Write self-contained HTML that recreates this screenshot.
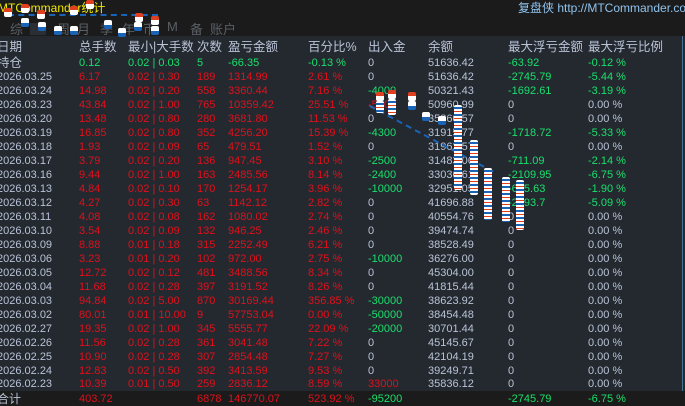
<!DOCTYPE html>
<html><head><meta charset="utf-8"><style>
*{margin:0;padding:0;box-sizing:border-box}
body{width:685px;height:406px;overflow:hidden;background:#242930;font-family:"Liberation Sans","Noto Sans CJK SC",sans-serif;font-size:11px;position:relative}
#top{position:absolute;left:0;top:0;width:685px;height:36px;background:#1b1b1b}
.t{position:absolute;white-space:nowrap}
.tb{position:absolute;top:19px;color:#5a5f66;font-size:13px;white-space:nowrap}
.r{position:absolute;left:0;width:685px;height:14px;line-height:14px}
.r span{position:absolute;top:0;white-space:nowrap}
.c0{left:-3px}.c1{left:79px}.c2{left:128px}.c3{left:197px}.c4{left:228px}.c5{left:308px}.c6{left:368px}.c7{left:428px}.c8{left:508px}.c9{left:588px}
.g{color:#b9c3d6}.rd{color:#e0101a}.gr{color:#19e06c}
.h{font-size:12.5px;color:#b9c3d6}
#tot{position:absolute;left:0;top:391px;width:685px;height:15px;background:#1b1b1b}
.mk{position:absolute;width:8px;border-radius:2px;background:repeating-linear-gradient(#fff 0 2px,#1a64b8 2px 4px,#fff 4px 6px,#e04020 6px 7px)}
.dn{position:absolute;width:8px;height:9px;background:#fff;border-radius:2px;border-top:4px solid #e04020}
.up{position:absolute;width:8px;height:9px;background:#fff;border-radius:2px;border-bottom:4px solid #1a64b8}
</style></head><body>
<div id="top"></div>
<div class="t" style="left:-2px;top:-1px;color:#f0e800;font-size:12px">MTCommander统计</div>
<div class="tb" style="left:10px">综</div><div class="tb" style="left:33px">日</div><div class="tb" style="left:57px">周</div><div class="tb" style="left:77px">月</div><div class="tb" style="left:100px">季</div><div class="tb" style="left:122px">年</div><div class="tb" style="left:143px">币</div><div class="tb" style="left:167px">M</div><div class="tb" style="left:190px">备</div><div class="tb" style="left:210px">账户</div>
<div style="position:absolute;left:30px;top:23px;width:16px;height:12px;background:#2a2f36"></div>
<div class="t" style="left:518px;top:-1px;color:#8fc3ee;font-size:12px">复盘侠 http://MTCommander.com</div>
<div style="position:absolute;left:682px;top:36px;width:1px;height:355px;background:#4a7090"></div>

<!-- top chart markers -->
<div style="position:absolute;left:8px;top:14px;width:150px;height:2px;border-top:2px dashed #1a64b8"></div>
<div class="dn" style="left:4px;top:8px"></div><div class="dn" style="left:21px;top:4px"></div><div class="dn" style="left:37px;top:10px"></div><div class="dn" style="left:70px;top:6px"></div><div class="dn" style="left:86px;top:0px"></div><div class="dn" style="left:135px;top:13px"></div><div class="dn" style="left:151px;top:16px"></div>
<div class="up" style="left:21px;top:18px"></div><div class="up" style="left:38px;top:22px"></div><div class="up" style="left:54px;top:26px"></div><div class="up" style="left:70px;top:26px"></div><div class="up" style="left:104px;top:20px"></div><div class="up" style="left:118px;top:28px"></div><div class="up" style="left:134px;top:22px"></div><div class="up" style="left:151px;top:26px"></div>

<div class="r h" style="top:40px"><span class="c0">日期</span><span class="c1">总手数</span><span class="c2">最小|大手数</span><span class="c3">次数</span><span class="c4">盈亏金额</span><span class="c5">百分比%</span><span class="c6">出入金</span><span class="c7">余额</span><span class="c8">最大浮亏金额</span><span class="c9">最大浮亏比例</span></div>
<div class="r" style="top:56px"><span class="c0 g" style="font-size:12.5px">持仓</span><span class="c1 gr">0.12</span><span class="c2 gr">0.02 | 0.03</span><span class="c3 gr">5</span><span class="c4 gr">-66.35</span><span class="c5 gr">-0.13 %</span><span class="c6 g">0</span><span class="c7 g">51636.42</span><span class="c8 gr">-63.92</span><span class="c9 gr">-0.12 %</span></div>

<div class="r" style="top:70px"><span class="c0 g">2026.03.25</span><span class="c1 rd">6.17</span><span class="c2 rd">0.02 | 0.30</span><span class="c3 rd">189</span><span class="c4 rd">1314.99</span><span class="c5 rd">2.61 %</span><span class="c6 g">0</span><span class="c7 g">51636.42</span><span class="c8 gr">-2745.79</span><span class="c9 gr">-5.44 %</span></div>
<div class="r" style="top:84px"><span class="c0 g">2026.03.24</span><span class="c1 rd">14.98</span><span class="c2 rd">0.02 | 0.20</span><span class="c3 rd">558</span><span class="c4 rd">3360.44</span><span class="c5 rd">7.16 %</span><span class="c6 gr">-4000</span><span class="c7 g">50321.43</span><span class="c8 gr">-1692.61</span><span class="c9 gr">-3.19 %</span></div>
<div class="r" style="top:98px"><span class="c0 g">2026.03.23</span><span class="c1 rd">43.84</span><span class="c2 rd">0.02 | 1.00</span><span class="c3 rd">765</span><span class="c4 rd">10359.42</span><span class="c5 rd">25.51 %</span><span class="c6 rd">-5000</span><span class="c7 g">50960.99</span><span class="c8 g">0</span><span class="c9 g">0.00 %</span></div>
<div class="r" style="top:112px"><span class="c0 g">2026.03.20</span><span class="c1 rd">13.48</span><span class="c2 rd">0.02 | 0.80</span><span class="c3 rd">280</span><span class="c4 rd">3681.80</span><span class="c5 rd">11.53 %</span><span class="c6 g">0</span><span class="c7 g">35860.57</span><span class="c8 g">0</span><span class="c9 g">0.00 %</span></div>
<div class="r" style="top:126px"><span class="c0 g">2026.03.19</span><span class="c1 rd">16.85</span><span class="c2 rd">0.02 | 0.80</span><span class="c3 rd">352</span><span class="c4 rd">4256.20</span><span class="c5 rd">15.39 %</span><span class="c6 gr">-4300</span><span class="c7 g">31915.77</span><span class="c8 gr">-1718.72</span><span class="c9 gr">-5.33 %</span></div>
<div class="r" style="top:140px"><span class="c0 g">2026.03.18</span><span class="c1 rd">1.93</span><span class="c2 rd">0.02 | 0.09</span><span class="c3 rd">65</span><span class="c4 rd">479.51</span><span class="c5 rd">1.52 %</span><span class="c6 g">0</span><span class="c7 g">31962.57</span><span class="c8 g">0</span><span class="c9 g">0.00 %</span></div>
<div class="r" style="top:154px"><span class="c0 g">2026.03.17</span><span class="c1 rd">3.79</span><span class="c2 rd">0.02 | 0.20</span><span class="c3 rd">136</span><span class="c4 rd">947.45</span><span class="c5 rd">3.10 %</span><span class="c6 gr">-2500</span><span class="c7 g">31483.06</span><span class="c8 gr">-711.09</span><span class="c9 gr">-2.14 %</span></div>
<div class="r" style="top:168px"><span class="c0 g">2026.03.16</span><span class="c1 rd">9.44</span><span class="c2 rd">0.02 | 1.00</span><span class="c3 rd">163</span><span class="c4 rd">2485.56</span><span class="c5 rd">8.14 %</span><span class="c6 gr">-2400</span><span class="c7 g">33036.61</span><span class="c8 gr">-2109.95</span><span class="c9 gr">-6.75 %</span></div>
<div class="r" style="top:182px"><span class="c0 g">2026.03.13</span><span class="c1 rd">4.84</span><span class="c2 rd">0.02 | 0.10</span><span class="c3 rd">170</span><span class="c4 rd">1254.17</span><span class="c5 rd">3.96 %</span><span class="c6 gr">-10000</span><span class="c7 g">32951.05</span><span class="c8 gr">-615.63</span><span class="c9 gr">-1.90 %</span></div>
<div class="r" style="top:196px"><span class="c0 g">2026.03.12</span><span class="c1 rd">4.27</span><span class="c2 rd">0.02 | 0.30</span><span class="c3 rd">63</span><span class="c4 rd">1142.12</span><span class="c5 rd">2.82 %</span><span class="c6 g">0</span><span class="c7 g">41696.88</span><span class="c8 gr">-2093.7</span><span class="c9 gr">-5.09 %</span></div>
<div class="r" style="top:210px"><span class="c0 g">2026.03.11</span><span class="c1 rd">4.08</span><span class="c2 rd">0.02 | 0.08</span><span class="c3 rd">162</span><span class="c4 rd">1080.02</span><span class="c5 rd">2.74 %</span><span class="c6 g">0</span><span class="c7 g">40554.76</span><span class="c8 g">0</span><span class="c9 g">0.00 %</span></div>
<div class="r" style="top:224px"><span class="c0 g">2026.03.10</span><span class="c1 rd">3.54</span><span class="c2 rd">0.02 | 0.09</span><span class="c3 rd">132</span><span class="c4 rd">946.25</span><span class="c5 rd">2.46 %</span><span class="c6 g">0</span><span class="c7 g">39474.74</span><span class="c8 g">0</span><span class="c9 g">0.00 %</span></div>
<div class="r" style="top:238px"><span class="c0 g">2026.03.09</span><span class="c1 rd">8.88</span><span class="c2 rd">0.01 | 0.18</span><span class="c3 rd">315</span><span class="c4 rd">2252.49</span><span class="c5 rd">6.21 %</span><span class="c6 g">0</span><span class="c7 g">38528.49</span><span class="c8 g">0</span><span class="c9 g">0.00 %</span></div>
<div class="r" style="top:252px"><span class="c0 g">2026.03.06</span><span class="c1 rd">3.23</span><span class="c2 rd">0.01 | 0.20</span><span class="c3 rd">102</span><span class="c4 rd">972.00</span><span class="c5 rd">2.75 %</span><span class="c6 gr">-10000</span><span class="c7 g">36276.00</span><span class="c8 g">0</span><span class="c9 g">0.00 %</span></div>
<div class="r" style="top:266px"><span class="c0 g">2026.03.05</span><span class="c1 rd">12.72</span><span class="c2 rd">0.02 | 0.12</span><span class="c3 rd">481</span><span class="c4 rd">3488.56</span><span class="c5 rd">8.34 %</span><span class="c6 g">0</span><span class="c7 g">45304.00</span><span class="c8 g">0</span><span class="c9 g">0.00 %</span></div>
<div class="r" style="top:280px"><span class="c0 g">2026.03.04</span><span class="c1 rd">11.68</span><span class="c2 rd">0.02 | 0.28</span><span class="c3 rd">397</span><span class="c4 rd">3191.52</span><span class="c5 rd">8.26 %</span><span class="c6 g">0</span><span class="c7 g">41815.44</span><span class="c8 g">0</span><span class="c9 g">0.00 %</span></div>
<div class="r" style="top:294px"><span class="c0 g">2026.03.03</span><span class="c1 rd">94.84</span><span class="c2 rd">0.02 | 5.00</span><span class="c3 rd">870</span><span class="c4 rd">30169.44</span><span class="c5 rd">356.85 %</span><span class="c6 gr">-30000</span><span class="c7 g">38623.92</span><span class="c8 g">0</span><span class="c9 g">0.00 %</span></div>
<div class="r" style="top:308px"><span class="c0 g">2026.03.02</span><span class="c1 rd">80.01</span><span class="c2 rd">0.01 | 10.00</span><span class="c3 rd">9</span><span class="c4 rd">57753.04</span><span class="c5 rd">0.00 %</span><span class="c6 gr">-50000</span><span class="c7 g">38454.48</span><span class="c8 g">0</span><span class="c9 g">0.00 %</span></div>
<div class="r" style="top:322px"><span class="c0 g">2026.02.27</span><span class="c1 rd">19.35</span><span class="c2 rd">0.02 | 1.00</span><span class="c3 rd">345</span><span class="c4 rd">5555.77</span><span class="c5 rd">22.09 %</span><span class="c6 gr">-20000</span><span class="c7 g">30701.44</span><span class="c8 g">0</span><span class="c9 g">0.00 %</span></div>
<div class="r" style="top:336px"><span class="c0 g">2026.02.26</span><span class="c1 rd">11.56</span><span class="c2 rd">0.02 | 0.28</span><span class="c3 rd">361</span><span class="c4 rd">3041.48</span><span class="c5 rd">7.22 %</span><span class="c6 g">0</span><span class="c7 g">45145.67</span><span class="c8 g">0</span><span class="c9 g">0.00 %</span></div>
<div class="r" style="top:350px"><span class="c0 g">2026.02.25</span><span class="c1 rd">10.90</span><span class="c2 rd">0.02 | 0.28</span><span class="c3 rd">307</span><span class="c4 rd">2854.48</span><span class="c5 rd">7.27 %</span><span class="c6 g">0</span><span class="c7 g">42104.19</span><span class="c8 g">0</span><span class="c9 g">0.00 %</span></div>
<div class="r" style="top:364px"><span class="c0 g">2026.02.24</span><span class="c1 rd">12.83</span><span class="c2 rd">0.02 | 0.50</span><span class="c3 rd">392</span><span class="c4 rd">3413.59</span><span class="c5 rd">9.53 %</span><span class="c6 g">0</span><span class="c7 g">39249.71</span><span class="c8 g">0</span><span class="c9 g">0.00 %</span></div>
<div class="r" style="top:377px"><span class="c0 g">2026.02.23</span><span class="c1 rd">10.39</span><span class="c2 rd">0.01 | 0.50</span><span class="c3 rd">259</span><span class="c4 rd">2836.12</span><span class="c5 rd">8.59 %</span><span class="c6 rd">33000</span><span class="c7 g">35836.12</span><span class="c8 g">0</span><span class="c9 g">0.00 %</span></div>
<div id="tot"></div>
<div class="r" style="top:392px"><span class="c0 g" style="font-size:12px">合计</span><span class="c1 rd">403.72</span><span class="c3 rd">6878</span><span class="c4 rd">146770.07</span><span class="c5 rd">523.92 %</span><span class="c6 gr">-95200</span><span class="c8 gr">-2745.79</span><span class="c9 gr">-6.75 %</span></div>

<!-- chart markers in table -->
<div style="position:absolute;left:370px;top:105px;width:140px;height:2px;border-top:2px dashed #1a64b8;transform:rotate(28deg);transform-origin:0 0"></div>
<div class="dn" style="left:376px;top:92px"></div><div class="mk" style="left:376px;top:101px;height:12px"></div>
<div class="dn" style="left:388px;top:90px"></div><div class="mk" style="left:388px;top:99px;height:16px"></div>
<div class="dn" style="left:408px;top:92px"></div><div class="up" style="left:408px;top:101px"></div>
<div class="up" style="left:422px;top:112px"></div><div class="up" style="left:438px;top:116px"></div>
<div class="mk" style="left:454px;top:105px;height:85px"></div>
<div class="mk" style="left:470px;top:140px;height:55px"></div>
<div class="mk" style="left:484px;top:168px;height:52px"></div>
<div class="mk" style="left:502px;top:177px;height:45px"></div>
<div class="mk" style="left:516px;top:180px;height:50px"></div>
</body></html>
